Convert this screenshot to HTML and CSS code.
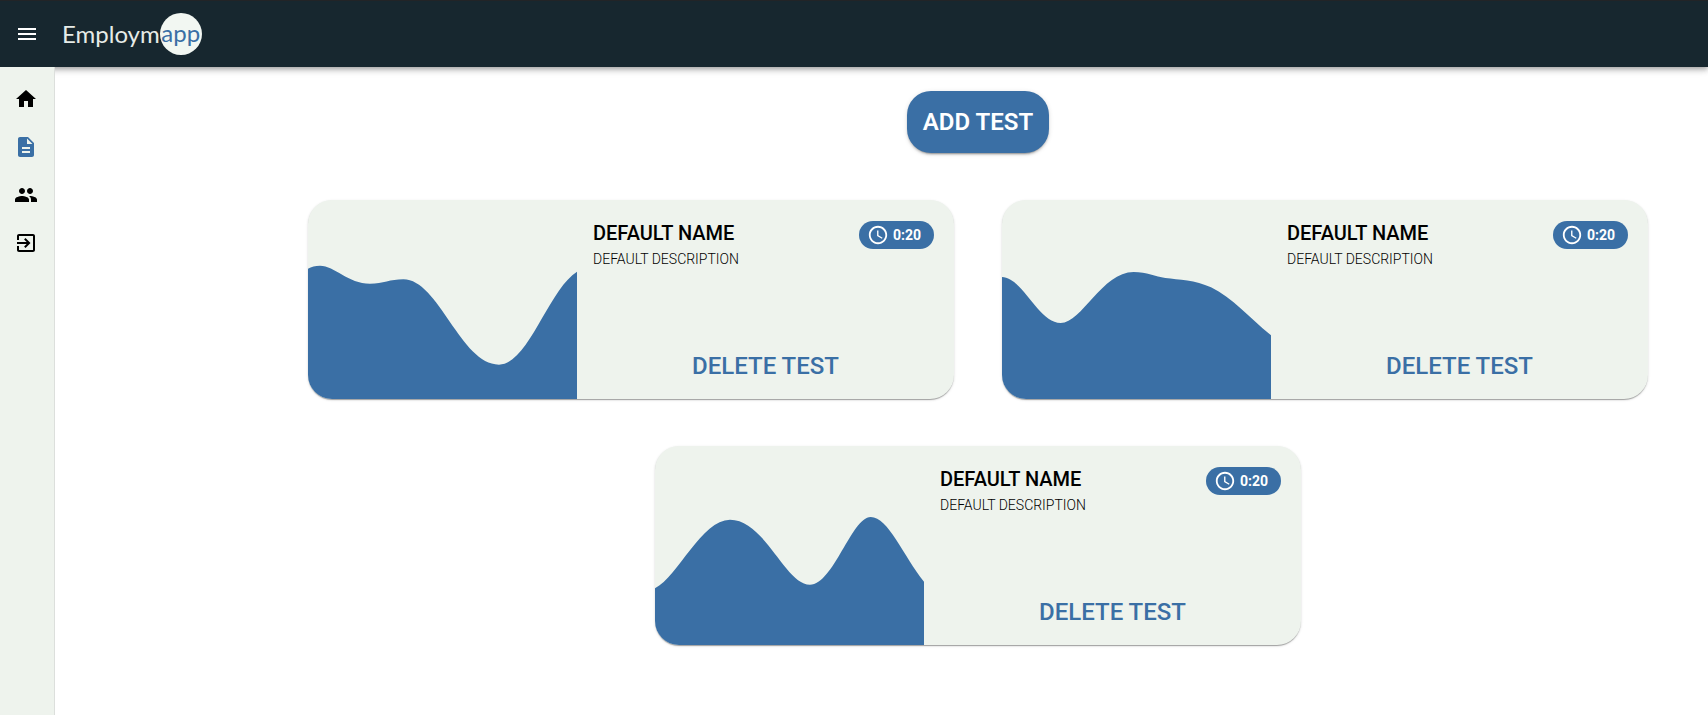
FILE: index.html
```html
<!DOCTYPE html>
<html lang="en">
<head>
<meta charset="utf-8">
<meta name="viewport" content="width=device-width, initial-scale=1">
<title>Employmapp</title>
<link rel="stylesheet" href="styles.css">
</head>
<body>
<header class="topbar">
  <button class="menu-button" type="button" aria-label="Menu">
    <svg class="icon" viewBox="0 0 24 24"><path d="M3 18h18v-2H3v2zm0-5h18v-2H3v2zm0-7v2h18V6H3z"/></svg>
  </button>
  <a class="logo" href="#"><span>Employm</span><span class="logo-badge">app</span></a>
</header>
<div class="layout">
  <nav class="sidebar" aria-label="Main">
    <a class="nav-link" href="#" aria-label="Home"><svg class="icon" viewBox="0 0 24 24"><path d="M10 20v-6h4v6h5v-8h3L12 3 2 12h3v8z"/></svg></a>
    <a class="nav-link active" href="#" aria-label="Tests"><svg class="icon" viewBox="0 0 24 24"><path d="M14 2H6c-1.100 0-1.990.9-1.990 2L4 20c0 1.100.89 2 1.990 2H18c1.100 0 2-.9 2-2V8l-6-6zm2 16H8v-2h8v2zm0-4H8v-2h8v2zm-3-5V3.500L18.500 9H13z"/></svg></a>
    <a class="nav-link" href="#" aria-label="People"><svg class="icon" viewBox="0 0 24 24"><path d="M16 11c1.660 0 2.990-1.340 2.990-3S17.660 5 16 5s-3 1.340-3 3 1.340 3 3 3zm-8 0c1.660 0 2.990-1.340 2.990-3S9.660 5 8 5 5 6.340 5 8s1.340 3 3 3zm0 2c-2.330 0-7 1.170-7 3.500V19h14v-2.500c0-2.330-4.670-3.500-7-3.500zm8 0c-.29 0-.62.02-.97.05 1.160.84 1.970 1.970 1.970 3.450V19h6v-2.500c0-2.330-4.670-3.500-7-3.500z"/></svg></a>
    <a class="nav-link" href="#" aria-label="Log out"><svg class="icon" viewBox="0 0 24 24"><path d="M10.090 15.590L11.500 17l5-5-5-5-1.410 1.410L12.670 11H3v2h9.670l-2.580 2.590zM19 3H5c-1.110 0-2 .9-2 2v4h2V5h14v14H5v-4H3v4c0 1.100.89 2 2 2h14c1.100 0 2-.9 2-2V5c0-1.100-.9-2-2-2z"/></svg></a>
  </nav>
  <main class="content">
    <button class="add-button" type="button">ADD TEST</button>
    <div class="cards">
      <article class="card">
        <svg class="wave" viewBox="0 0 807 597" preserveAspectRatio="none"><path d="M0 206C10 200 22 197 36 197C80 197 120 251 186 251C226 251 246 238 286 238C392 238 458 494 573 494C660 494 722 268 807 215V597H0Z"/></svg>
        <div class="card-body">
          <div class="card-head">
            <div><h2 class="name">DEFAULT NAME</h2><p class="description">DEFAULT DESCRIPTION</p></div>
            <div class="chip"><svg class="chip-icon" viewBox="0 0 24 24"><path d="M11.990 2C6.470 2 2 6.480 2 12s4.470 10 9.990 10C17.520 22 22 17.520 22 12S17.520 2 11.990 2zM12 20c-4.420 0-8-3.580-8-8s3.580-8 8-8 8 3.580 8 8-3.580 8-8 8zm.5-13H11v6l5.250 3.150.75-1.230-4.500-2.670z"/></svg><span>0:20</span></div>
          </div>
          <button class="delete-button" type="button">DELETE TEST</button>
        </div>
      </article>
      <article class="card">
        <svg class="wave" viewBox="0 0 807 597" preserveAspectRatio="none"><path d="M0 231C60 231 110 369 176 369C240 369 300 216 395 216C435 216 460 230 490 234C530 239 580 240 627 262C690 292 740 352 807 406V597H0Z"/></svg>
        <div class="card-body">
          <div class="card-head">
            <div><h2 class="name">DEFAULT NAME</h2><p class="description">DEFAULT DESCRIPTION</p></div>
            <div class="chip"><svg class="chip-icon" viewBox="0 0 24 24"><path d="M11.990 2C6.470 2 2 6.480 2 12s4.470 10 9.990 10C17.520 22 22 17.520 22 12S17.520 2 11.990 2zM12 20c-4.420 0-8-3.580-8-8s3.580-8 8-8 8 3.580 8 8-3.580 8-8 8zm.5-13H11v6l5.250 3.150.75-1.230-4.500-2.670z"/></svg><span>0:20</span></div>
          </div>
          <button class="delete-button" type="button">DELETE TEST</button>
        </div>
      </article>
      <article class="card">
        <svg class="wave" viewBox="0 0 807 597" preserveAspectRatio="none"><path d="M0 427C70 390 140 221 225 221C330 221 390 416 465 416C535 416 590 213 647 213C700 213 745 330 807 407V597H0Z"/></svg>
        <div class="card-body">
          <div class="card-head">
            <div><h2 class="name">DEFAULT NAME</h2><p class="description">DEFAULT DESCRIPTION</p></div>
            <div class="chip"><svg class="chip-icon" viewBox="0 0 24 24"><path d="M11.990 2C6.470 2 2 6.480 2 12s4.470 10 9.990 10C17.520 22 22 17.520 22 12S17.520 2 11.990 2zM12 20c-4.420 0-8-3.580-8-8s3.580-8 8-8 8 3.580 8 8-3.580 8-8 8zm.5-13H11v6l5.250 3.150.75-1.230-4.500-2.670z"/></svg><span>0:20</span></div>
          </div>
          <button class="delete-button" type="button">DELETE TEST</button>
        </div>
      </article>
    </div>
  </main>
</div>
</body>
</html>
```
FILE: styles.css
```css
:root {
  --blue: #3a6fa5;
  --mint: #eef3ed;
  --navy: #17272f;
}

* {
  box-sizing: border-box;
}

body {
  margin: 0;
  min-height: 100vh;
  display: flex;
  flex-direction: column;
  background: #fff;
  color: #000;
  font-family: Roboto, "Liberation Sans", sans-serif;
}

button {
  border: 0;
  margin: 0;
  background: none;
  font: inherit;
  cursor: pointer;
}

.icon {
  display: block;
  width: 24px;
  height: 24px;
  fill: currentColor;
}

.topbar {
  display: flex;
  align-items: center;
  height: 67px;
  padding-left: 15px;
  gap: 23px;
  border-top: 1px solid #222427;
  background: var(--navy);
  color: #fff;
  box-shadow: 0 2px 4px -1px rgba(0, 0, 0, .2), 0 4px 5px rgba(0, 0, 0, .14), 0 1px 10px rgba(0, 0, 0, .12);
}

.menu-button {
  padding: 0;
  color: inherit;
}

.logo {
  display: flex;
  align-items: center;
  color: #e6ebe7;
  font: 24px/40px Lato, sans-serif;
  text-decoration: none;
}

.logo-badge {
  width: 42px;
  height: 42px;
  border-radius: 50%;
  background: #f2f7f2;
  color: var(--blue);
  text-align: center;
}

.layout {
  flex: 1;
  display: flex;
}

.sidebar {
  position: relative;
  flex: none;
  display: flex;
  flex-direction: column;
  gap: 24px;
  width: 55px;
  padding: 20px 14px;
  border-right: 1px solid #dcdfdc;
  background: var(--mint);
}

.nav-link {
  color: #000;
}

.nav-link.active {
  color: var(--blue);
}

.content {
  flex: 1;
  display: flex;
  flex-direction: column;
  align-items: center;
  gap: 47px;
  padding: 24px 0 24px 193px;
}

.add-button {
  padding: 10px 16px;
  border-radius: 24px;
  background: var(--blue);
  color: #fff;
  font-size: 24px;
  font-weight: 600;
  line-height: 42px;
  box-shadow: 0 3px 1px -2px rgba(0, 0, 0, .2), 0 2px 2px rgba(0, 0, 0, .14), 0 1px 5px rgba(0, 0, 0, .12);
}

.cards {
  display: flex;
  flex-wrap: wrap;
  justify-content: center;
  gap: 47px 48px;
}

.card {
  display: flex;
  flex: 0 1 646px;
  min-height: 199px;
  overflow: hidden;
  border-radius: 24px;
  background: var(--mint);
  box-shadow: 0 2px 1px -1px rgba(0, 0, 0, .2), 0 1px 1px rgba(0, 0, 0, .14), 0 1px 3px rgba(0, 0, 0, .12);
}

.wave {
  flex: none;
  width: 269px;
  height: auto;
  fill: var(--blue);
}

.card-body {
  flex: 1;
  display: flex;
  flex-direction: column;
  justify-content: space-between;
  padding: 17px 0 12px;
}

.card-head {
  display: flex;
  justify-content: space-between;
  align-items: flex-start;
  padding: 0 20px 0 16px;
}

.name {
  margin: 0;
  font-size: 20px;
  font-weight: 500;
  line-height: 32px;
}

.description {
  margin: 0;
  font-size: 14px;
  font-weight: 300;
  line-height: 20px;
}

.chip {
  display: flex;
  align-items: center;
  gap: 4px;
  margin-top: 4px;
  padding: 3px 13px 3px 8px;
  border-radius: 14px;
  background: var(--blue);
  color: #fff;
  font-size: 14px;
  font-weight: 700;
  line-height: 20px;
}

.chip-icon {
  width: 22px;
  height: 22px;
  fill: currentColor;
}

.delete-button {
  align-self: center;
  padding: 0 8px;
  color: var(--blue);
  font-size: 24px;
  font-weight: 500;
  line-height: 42px;
}
```
